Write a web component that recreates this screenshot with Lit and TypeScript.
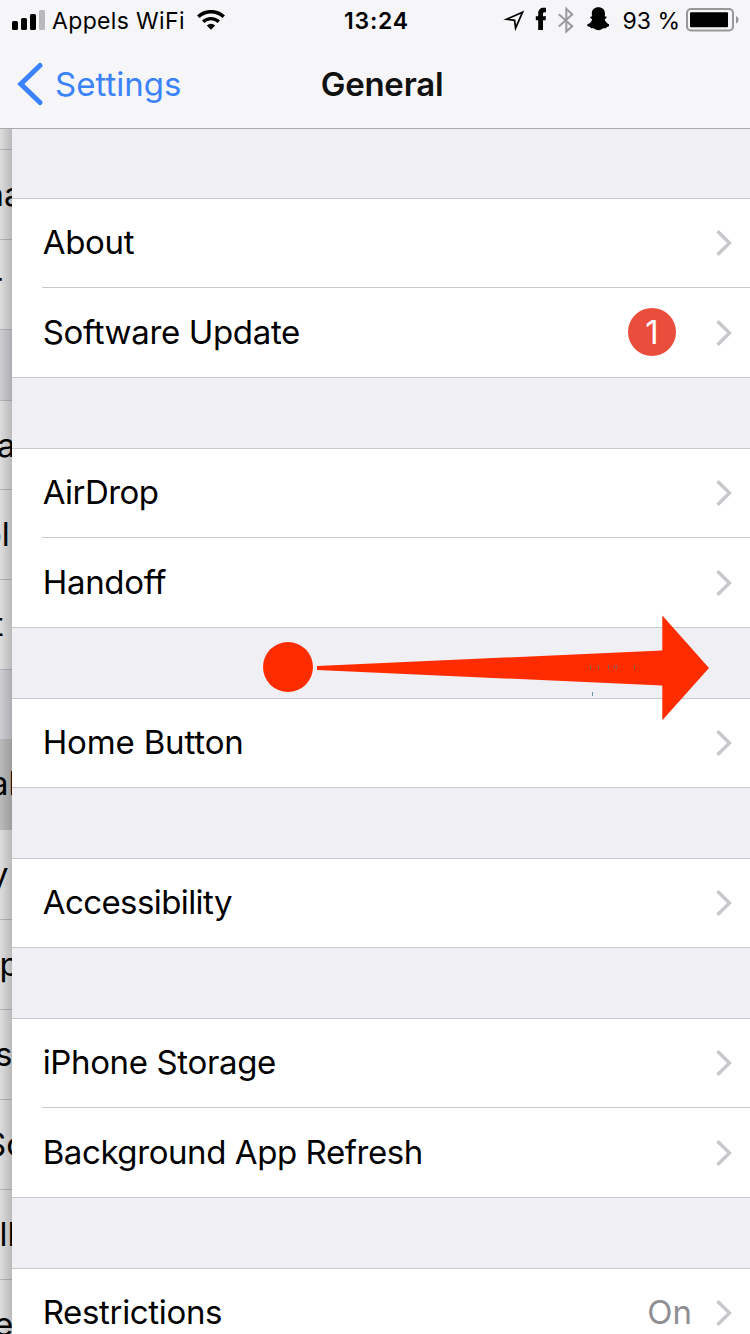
import { LitElement, html, css, svg } from "lit";
import { customElement } from "lit/decorators.js";

interface Row {
  label: string;
  spacing: number;
  badge?: string;
  value?: string;
}

interface Sliver {
  text: string;
  shift: number;
  height: number;
  kind?: string;
}

const groups: Row[][] = [
  [
    { label: "About", spacing: -0.3 },
    { label: "Software Update", spacing: -0.35 },
  ],
  [
    { label: "AirDrop", spacing: -0.55 },
    { label: "Handoff", spacing: -0.3 },
  ],
  [{ label: "Home Button", spacing: -0.15 }],
  [{ label: "Accessibility", spacing: -0.58 }],
  [
    { label: "iPhone Storage", spacing: -0.36 },
    { label: "Background App Refresh", spacing: -0.42 },
  ],
  [{ label: "Restrictions", spacing: -0.33, value: "On" }],
];
groups[0][1].badge = "1";

const slivers: Sliver[] = [
  { text: "", shift: 0, height: 21 },
  { text: "na", shift: -15.5, height: 90 },
  { text: "r", shift: -10, height: 90 },
  { text: "", shift: 0, height: 71, kind: "gap" },
  { text: "a", shift: -3, height: 89 },
  { text: "ol", shift: -18, height: 90 },
  { text: "t", shift: -7.5, height: 90 },
  { text: "", shift: 0, height: 69, kind: "gap plain" },
  { text: "al", shift: -10, height: 91, kind: "picked plain" },
  { text: "y", shift: -10, height: 90 },
  { text: "p", shift: -0.5, height: 90 },
  { text: "s", shift: -5, height: 90 },
  { text: "Sc", shift: -15, height: 90 },
  { text: "ll", shift: -0.5, height: 90 },
  { text: "e", shift: -6, height: 90 },
];

@customElement("app-root")
export class AppRoot extends LitElement {
  static styles = css`
    :host {
      display: block;
      position: relative;
      width: 750px;
      height: 1334px;
      overflow: hidden;
      background: #efeff4;
      color: #000;
      font-family: Inter, "Liberation Sans", sans-serif;
      font-size: 33px;
    }
    svg { display: block; flex: none; }
    .header {
      height: 128px;
      background: #f6f6f8;
      border-bottom: 1px solid #a9a9ac;
    }
    .status {
      display: grid;
      grid-template-columns: 1fr auto 1fr;
      align-items: center;
      height: 40px;
      padding: 0 11px 0 12px;
      font-size: 23px;
    }
    .left, .right { display: flex; align-items: center; }
    .right { justify-content: flex-end; }
    .left span, .right span, .time { padding-top: 1px; }
    .carrier { margin: 0 12px 0 7px; letter-spacing: 0.35px; }
    .time { font-weight: 600; letter-spacing: 0.8px; margin-left: 2px; }
    .percent { margin: 0 6px 0 13px; white-space: nowrap; }
    .nav {
      display: grid;
      grid-template-columns: 1fr auto 1fr;
      align-items: center;
      height: 88px;
      padding: 0 3px 0 17px;
    }
    .back { display: flex; align-items: center; color: #3b82fb; }
    .back span { margin-left: 12px; }
    .title { font-weight: 600; color: #111; letter-spacing: -0.25px; }
    .body { display: grid; grid-template-columns: 12px 738px; height: 1205px; overflow: hidden; }
    .under {
      position: relative;
      overflow: hidden;
      background: #e6e6e6;
    }
    .sliver {
      box-sizing: border-box;
      border-bottom: 1px solid #bcbbc0;
      background: #e4e4e4;
      line-height: 88px;
      white-space: nowrap;
      overflow: hidden;
    }
    .gap { background: #d6d5da; }
    .picked { background: #c0c0c0; }
    .plain { border-bottom: none; }
    .sliver span { display: inline-block; }
    .shade {
      position: absolute;
      inset: 0;
      background: linear-gradient(to right, rgba(0, 0, 0, 0.03), rgba(0, 0, 0, 0.19));
    }
    .list { padding-top: 69px; }
    .group {
      background: #fff;
      box-shadow: inset 0 1px #c8c7cc, inset 0 -1px #c8c7cc;
      margin-bottom: 70px;
    }
    .row { height: 90px; padding-left: 30px; }
    .cell {
      box-sizing: border-box;
      display: flex;
      align-items: center;
      height: 90px;
      padding-right: 18px;
      border-bottom: 1px solid #c8c7cc;
    }
    .label { flex: 1; white-space: nowrap; padding: 0 0 2px 0.7px; }
    .badge {
      width: 48px;
      height: 48px;
      margin: 0 40px 2px 0;
      border-radius: 50%;
      background: #eb4d3d;
      color: #fff;
      text-align: center;
      line-height: 48px;
    }
    .value { color: #8e8e93; margin-right: 24px; padding-bottom: 2px; }
    .arrow { position: absolute; left: 260px; top: 610px; }
  `;

  private chevron() {
    return html`<svg width="16" height="28" viewBox="0 0 16 28">
      <path d="M1.5 2.2 L13.5 14 L1.5 25.8" fill="none" stroke="#c7c7cc" stroke-width="3.4" />
    </svg>`;
  }

  private row(r: Row) {
    return html`<div class="row"><div class="cell">
      <span class="label" style="letter-spacing:${r.spacing}px">${r.label}</span>
      ${r.badge ? html`<span class="badge">${r.badge}</span>` : ""}
      ${r.value ? html`<span class="value">${r.value}</span>` : ""}
      ${this.chevron()}
    </div></div>`;
  }

  render() {
    return html`
      <div class="header">
        <div class="status">
          <div class="left">
            <svg width="33" height="20" viewBox="0 0 33 20">
              <rect x="0" y="11" width="6" height="9" rx="1.6" />
              <rect x="9" y="8" width="6" height="12" rx="1.6" />
              <rect x="18" y="4" width="6" height="16" rx="1.6" />
              <rect x="27" y="0" width="6" height="20" rx="1.6" fill="#b9b9bb" />
            </svg>
            <span class="carrier">Appels WiFi</span>
            <svg width="28" height="20" viewBox="0 0 28 20">
              <path d="M1.3 6.8 A18.5 18.5 0 0 1 26.7 6.8" fill="none" stroke="#000" stroke-width="3.6" />
              <path d="M6.2 11.7 A11.5 11.5 0 0 1 21.8 11.7" fill="none" stroke="#000" stroke-width="3.4" />
              <path d="M9.8 15.6 A6.5 6.5 0 0 1 18.2 15.6 L14 19.8 Z" />
            </svg>
          </div>
          <span class="time">13:24</span>
          <div class="right">
            <svg width="106" height="28" viewBox="503 6 106 28">
              <path d="M506.5 19.3 L522.6 12.2 L515.6 28.2 L514.6 20.3 Z" fill="none" stroke="#000" stroke-width="1.7" stroke-linejoin="miter" />
              <path d="M538.2 30 V20.3 H535.8 V16.2 H538.2 V13.8 C538.2 9.5 540.6 7.8 543.4 7.8 H546 V12.2 H544.4 C543.4 12.2 543 12.7 543 13.8 V16.2 H546 L545.6 20.3 H543 V30 Z" />
              <path d="M558.8 14.2 L572.2 26.2 L566.3 31.6 V8.8 L572.2 14.4 L558.8 26.4" fill="none" stroke="#9a9a9d" stroke-width="2" />
              <path d="M598.4 7.2 C602.3 7.2 605 9.6 605 13.6 L604.8 16.6 C606.6 16 607.5 17.5 605.6 18.6 L604.6 19.5 C605.5 22.1 607.3 23.7 610 24.7 C610 26.1 608.1 26.8 606.6 27 L606 28.3 C603.3 27.9 602.8 28.4 601.2 29.4 C599.3 30.5 597.5 30.5 595.6 29.4 C594 28.4 593.5 27.9 590.8 28.3 L590.2 27 C588.7 26.8 587 26.1 587 24.7 C589.6 23.7 591.3 22.1 592.2 19.5 L591.2 18.6 C589.3 17.5 590.2 16 592 16.6 L591.8 13.6 C591.8 9.6 594.5 7.2 598.4 7.2 Z" />
            </svg>
            <span class="percent">93 %</span>
            <svg width="53" height="24" viewBox="0 0 53 24">
              <rect x="1" y="1" width="46" height="21.4" rx="4" fill="none" stroke="#98989b" stroke-width="2" />
              <rect x="4" y="4.2" width="38" height="15" rx="1" />
              <path d="M50 8 C53.4 9.4 53.4 14 50 15.4 Z" fill="#98989b" />
            </svg>
          </div>
        </div>
        <div class="nav">
          <div class="back">
            <svg width="26" height="44" viewBox="0 0 26 44">
              <path d="M23 3.5 L3.8 22 L23 40.5" fill="none" stroke="#3b82fb" stroke-width="5" stroke-linecap="round" />
            </svg>
            <span>Settings</span>
          </div>
          <span class="title">General</span>
          <span></span>
        </div>
      </div>
      <div class="body">
        <div class="under">
          ${slivers.map((s) => html`<div class="sliver ${s.kind ?? ""}" style="height:${s.height}px"><span style="margin-left:${s.shift}px">${s.text}</span></div>`)}
          <div class="shade"></div>
        </div>
        <div class="list">
          ${groups.map((g) => html`<div class="group">${g.map((r) => this.row(r))}</div>`)}
        </div>
      </div>
      <svg class="arrow" width="460" height="120" viewBox="260 610 460 120">
        <circle cx="288" cy="667" r="25" fill="#ff2c00" />
        <path d="M317 666 L662.3 650.5 V615.5 L709 668 L662.3 720.3 V685.5 L317 670 Z" fill="#ff2c00" />
        ${[590, 598, 608, 614, 616, 634].map((x) => svg`<rect x=${x} y="665" width="1" height="4" fill="#916052" />`)}
        <rect x="592" y="692" width="1" height="4" fill="#6f8c9e" />
      </svg>
    `;
  }
}
